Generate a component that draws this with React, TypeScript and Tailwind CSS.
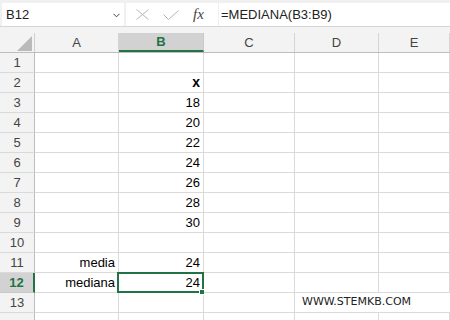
import React from "react";

const COLS = ["A", "B", "C", "D", "E"];

type Cell = { v: string; align?: "left" | "right"; bold?: boolean };

const data: Record<number, Record<string, Cell>> = {
  2: { B: { v: "x", align: "right", bold: true } },
  3: { B: { v: "18", align: "right" } },
  4: { B: { v: "20", align: "right" } },
  5: { B: { v: "22", align: "right" } },
  6: { B: { v: "24", align: "right" } },
  7: { B: { v: "26", align: "right" } },
  8: { B: { v: "28", align: "right" } },
  9: { B: { v: "30", align: "right" } },
  11: { A: { v: "media", align: "right" }, B: { v: "24", align: "right" } },
  12: { A: { v: "mediana", align: "right" }, B: { v: "24", align: "right" } },
};

export default function App() {
  const rows = Array.from({ length: 14 }, (_, i) => i + 1);
  return (
    <div className="w-[450px] h-[320px] overflow-hidden bg-white font-['Liberation_Sans',Arial,sans-serif]">
      {/* formula bar */}
      <div className="flex h-[27px] bg-[#f0f0f0] border-b border-[#d6d6d6] pt-[3px] pl-[2px]">
        <div className="w-[122px] h-[23px] bg-white flex items-center justify-between pl-[4px] pr-[4px] text-[13px] text-[#222]">
          <span>B12</span>
          <svg width="7" height="5" viewBox="0 0 7 5" className="mt-[1px]">
            <path d="M0.5 0.8 L3.5 3.8 L6.5 0.8" stroke="#444" strokeWidth="1" fill="none" />
          </svg>
        </div>
        <div className="ml-[2px] w-[92px] h-[23px] bg-white flex items-center pl-[10px]">
          <svg width="13" height="11" viewBox="0 0 13 11">
            <path d="M0.5 0.5 L12.5 10.5 M12.5 0.5 L0.5 10.5" stroke="#b5b5b5" strokeWidth="1" fill="none" />
          </svg>
          <svg width="16" height="10" viewBox="0 0 16 10" className="ml-[14px]">
            <path d="M0.5 4.5 L5.5 9.5 L15.5 0.5" stroke="#b5b5b5" strokeWidth="1" fill="none" />
          </svg>
          <span className="ml-[14px] font-['Liberation_Serif',serif] italic text-[15px] text-[#444] leading-none">
            fx
          </span>
        </div>
        <div className="ml-[1px] flex-1 h-[23px] bg-white flex items-center pl-[2px] text-[13px] text-[#222]">
          =MEDIANA(B3:B9)
        </div>
      </div>

      {/* grid */}
      <div className="grid grid-cols-[35px_84px_85px_91px_84px_1fr]">
        {/* select all */}
        <div className="h-[26px] bg-[#f3f3f3] border-b border-[#bdbdbd]">
          <div className="mt-[6px] h-[19px] border-r border-[#d0d0d0] flex items-end justify-end pr-[2px] pb-[1px]">
            <svg width="15" height="15" viewBox="0 0 15 15">
              <polygon points="15,0 15,15 0,15" fill="#bababa" />
            </svg>
          </div>
        </div>
        {COLS.map((c) => {
          const sel = c === "B";
          return (
            <div key={c} className="h-[26px] bg-[#f3f3f3] border-b border-[#bdbdbd]">
              <div
                className={
                  sel
                    ? "mt-[6px] h-[19px] border-r border-r-[#c8c8c8] bg-[#d2d2d2] border-b-2 border-b-[#217346] flex items-center justify-center text-[13px] font-bold text-[#217346]"
                    : "mt-[6px] h-[19px] border-r border-[#d4d4d4] flex items-center justify-center text-[13px] text-[#444]"
                }
              >
                {c}
              </div>
            </div>
          );
        })}

        {rows.map((r) => {
          const sel = r === 12;
          return (
            <React.Fragment key={r}>
              <div
                className={
                  sel
                    ? "h-[20px] bg-[#d2d2d2] border-b border-b-[#c8c8c8] border-r-2 border-r-[#217346] flex items-center justify-center text-[13px] font-bold text-[#217346]"
                    : "h-[20px] bg-[#f3f3f3] border-b border-b-[#dadada] border-r border-r-[#bdbdbd] flex items-center justify-center text-[13px] text-[#444]"
                }
              >
                {r <= 13 ? r : ""}
              </div>
              {r === 13 ? (
                <>
                  <div className="h-[20px] border-b border-r border-[#dadada]" />
                  <div className="h-[20px] border-b border-r border-[#dadada]" />
                  <div className="h-[20px] border-b border-r border-[#dadada]" />
                  <div className="col-span-2 h-[20px] border-b border-[#dadada] pl-[7px] font-['DejaVu_Sans',Verdana,sans-serif] text-[11px] leading-[17px] text-[#222] whitespace-nowrap">
                    WWW.STEMKB.COM
                  </div>
                </>
              ) : (
                COLS.map((c) => {
                  const cell = data[r]?.[c];
                  const isSel = r === 12 && c === "B";
                  return (
                    <div
                      key={c}
                      className={`relative h-[20px] border-b border-r border-[#dadada] px-[3px] text-[13px] leading-[19px] text-black whitespace-nowrap ${
                        cell?.align === "right" ? "text-right" : "text-left"
                      } ${cell?.bold ? "font-bold text-[14px]" : ""}`}
                    >
                      {cell?.v}
                      {isSel && (
                        <>
                          <div className="absolute left-[-2px] top-[-1px] right-[-1px] bottom-[-1px] border-2 border-[#217346] pointer-events-none" />
                          <div className="absolute right-[-2px] bottom-[-3px] w-[6px] h-[6px] bg-[#217346] border border-white" />
                        </>
                      )}
                    </div>
                  );
                })
              )}
            </React.Fragment>
          );
        })}
      </div>
    </div>
  );
}
